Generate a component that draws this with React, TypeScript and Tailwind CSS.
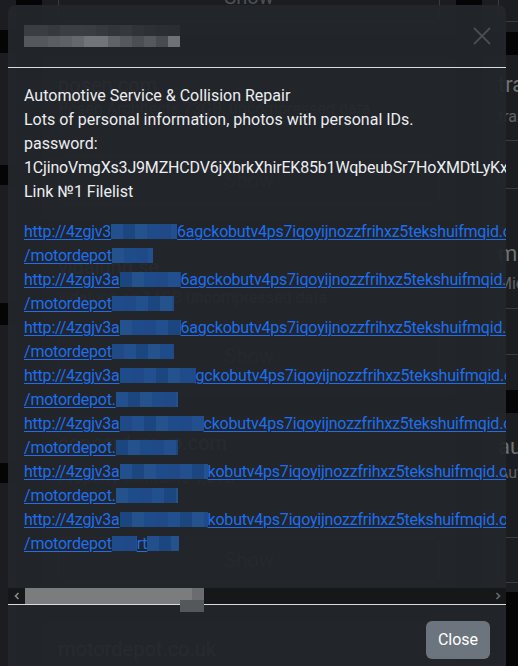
import React from "react";

const TITLE_ROW1 = ["#3a3d41","#3a3d41","#36393d","#3b3e42","#3b3e42","#3a3d41","#363a3e","#333639","#35383c","#303337","#2d3034","#2b2e32","#2a2d31"];
const TITLE_ROW2 = ["#54575b","#54575b","#5a5d61","#5e6165","#66696c","#727578","#727578","#5f6266","#55585c","#4b4e52","#55585c","#484b4f","#6f7275"];

type Piece = string | number;
const LINKS: { l1: Piece[]; l2: Piece[] }[] = [
  { l1: ["http://4zgjv3", 66, "6agckobutv4ps7iqoyijnozzfrihxz5tekshuifmqid.onion"], l2: ["/motordepot", 41] },
  { l1: ["http://4zgjv3a", 61, "6agckobutv4ps7iqoyijnozzfrihxz5tekshuifmqid.onion"], l2: ["/motordepot", 62] },
  { l1: ["http://4zgjv3a", 61, "6agckobutv4ps7iqoyijnozzfrihxz5tekshuifmqid.onion"], l2: ["/motordepot", 62] },
  { l1: ["http://4zgjv3a", 76, "gckobutv4ps7iqoyijnozzfrihxz5tekshuifmqid.onion"], l2: ["/motordepot.", 62] },
  { l1: ["http://4zgjv3a", 84, "ckobutv4ps7iqoyijnozzfrihxz5tekshuifmqid.onion"], l2: ["/motordepot.", 62] },
  { l1: ["http://4zgjv3a", 88, "kobutv4ps7iqoyijnozzfrihxz5tekshuifmqid.onion"], l2: ["/motordepot.", 62] },
  { l1: ["http://4zgjv3a", 88, "kobutv4ps7iqoyijnozzfrihxz5tekshuifmqid.onion"], l2: ["/motordepot", 25, "rt", 32] },
];

const TONES = ["#1f4a87", "#22508f", "#1c467f", "#24528d", "#1e4b89"];

function Redact({ w, seed }: { w: number; seed: number }) {
  const cells = Math.max(1, Math.ceil(w / 12));
  return (
    <span className="inline-flex h-[15px] align-[-2px] overflow-hidden" style={{ width: w }}>
      {Array.from({ length: cells }).map((_, i) => (
        <span key={i} className="h-full w-[12px] shrink-0" style={{ backgroundColor: TONES[(i + seed) % TONES.length] }} />
      ))}
    </span>
  );
}

function LinkLine({ parts, seed }: { parts: Piece[]; seed: number }) {
  return (
    <div className="h-6 leading-6 whitespace-nowrap tracking-[-0.22px]">
      <a className="text-[#1d6ff0] underline decoration-1 underline-offset-[2px]">
        {parts.map((p, i) =>
          typeof p === "number" ? <Redact key={i} w={p} seed={seed + i} /> : <span key={i}>{p}</span>
        )}
      </a>
    </div>
  );
}

function ShowBox({ h = "h-[48px]" }: { h?: string }) {
  return (
    <div className={`${h} rounded-[6px] border border-[#393b3e] flex items-center justify-center text-[20px] text-[#4e5053]`}>
      Show
    </div>
  );
}

function Background() {
  const card = "shrink-0 rounded-[6px] bg-[#1c1d20]";
  return (
    <div className="flex gap-[26px] ml-[-398px] font-['Roboto',sans-serif]">
      {/* column A */}
      <div className="flex flex-col w-[414px] shrink-0 mt-[-70px]">
        <div className={`${card} h-[100px]`} />
        <div className={`${card} mt-[23px] h-[112px]`} />
        <div className={`${card} mt-[20px] h-[118px]`} />
        <div className={`${card} mt-[22px] h-[138px]`} />
        <div className={`${card} mt-[20px] h-[200px]`} />
      </div>
      {/* column B */}
      <div className="flex flex-col w-[414px] shrink-0 mt-[-80px]">
        <div className={`${card} h-[115px] flex flex-col justify-end px-4 pb-[13px]`}>
          <ShowBox h="h-[50px]" />
        </div>
        <div className={`${card} mt-[22px] h-[164px] flex flex-col p-4`}>
          <div className="text-[20px] leading-6 text-[#6f7174]">posen.com</div>
          <div className="text-[16px] leading-6 text-[#5e6063] whitespace-nowrap">Posen Architects 73GB, uncompressed data</div>
          <div className="mt-auto"><ShowBox h="h-[50px]" /></div>
        </div>
        <div className={`${card} mt-[18px] h-[157px] flex flex-col p-4`}>
          <div className="text-[20px] leading-6 text-[#6f7174]">vidalung.se</div>
          <div className="mt-[7px] text-[16px] leading-6 text-[#5e6063] whitespace-nowrap">vidalung.se 14GB uncompressed data</div>
          <div className="mt-auto"><ShowBox /></div>
        </div>
        <div className={`${card} mt-[19px] h-[184px] flex flex-col p-4`}>
          <div className="text-[20px] leading-6 text-[#6f7174]">concordgroup.com</div>
          <div className="mt-[11px] text-[16px] leading-6 text-[#5e6063] whitespace-nowrap">Property contracts 1,5TB</div>
          <div className="mt-auto"><ShowBox h="h-[46px]" /></div>
        </div>
        <div className={`${card} mt-[22px] h-[100px] flex flex-col p-4`}>
          <div className="text-[20px] leading-6 text-[#6f7174]">motordepot.co.uk</div>
        </div>
      </div>
      {/* column C */}
      <div className="flex flex-col w-[414px] shrink-0 mt-[-80px]">
        <div className={`${card} h-[112px] flex flex-col justify-end px-4 pb-[10px]`}>
          <ShowBox h="h-[50px]" />
        </div>
        <div className={`${card} mt-[23px] h-[335px] flex flex-col px-4 pt-[17px]`}>
          <div className="text-[22px] leading-[26px] text-[#6f7174]">transportes.com</div>
          <div className="mt-[7px] text-[16px] leading-6 text-[#5e6063]">transport data</div>
          <div className="mt-[11px]"><ShowBox h="h-[49px]" /></div>
          <div className="mt-[52px] text-[22px] leading-[26px] text-[#6f7174]">midwestcorp.com</div>
          <div className="mt-[5px] text-[16px] leading-6 text-[#5e6063]">Midwest data</div>
          <div className="mt-[12px]"><ShowBox h="h-[47px]" /></div>
        </div>
        <div className={`${card} mt-[23px] h-[179px] flex flex-col px-4 pt-[21px]`}>
          <div className="text-[22px] leading-[26px] text-[#6f7174]">autoparts.com</div>
          <div className="mt-[1px] text-[16px] leading-6 text-[#5e6063]">Auto data</div>
          <div className="mt-auto mb-[9px]"><ShowBox h="h-[46px]" /></div>
        </div>
      </div>
    </div>
  );
}

function Modal() {
  return (
    <div className="absolute left-[8px] top-[5px] w-[498px] h-[690px] rounded-t-[7px] bg-[#23262a]/[0.94] flex flex-col text-[#eceef0] font-['Roboto',sans-serif] text-[16px]">
      {/* header */}
      <div className="h-[63px] shrink-0 border-b border-[#d9dcdf] flex items-center justify-between pl-4 pr-4">
        <div className="flex flex-col">
          <div className="flex h-[11px]">
            {TITLE_ROW1.map((c, i) => (
              <div key={i} className="w-[12px] h-full" style={{ backgroundColor: c }} />
            ))}
          </div>
          <div className="flex h-[11px]">
            {TITLE_ROW2.map((c, i) => (
              <div key={i} className="w-[12px] h-full" style={{ backgroundColor: c }} />
            ))}
          </div>
        </div>
        <svg width="18" height="18" viewBox="0 0 18 18" className="ml-auto mr-[-1px]">
          <path d="M1 1 L17 17 M17 1 L1 17" stroke="#4a4d51" strokeWidth="1.8" />
        </svg>
      </div>
      {/* body */}
      <div className="shrink-0 overflow-hidden px-4 pt-4 pb-4">
        <div className="mb-4 leading-6 whitespace-nowrap">
          <div>Automotive Service &amp; Collision Repair</div>
          <div>Lots of personal information, photos with personal IDs.</div>
          <div>password:</div>
          <div className="tracking-[-0.18px]">1CjinoVmgXs3J9MZHCDV6jXbrkXhirEK85b1WqbeubSr7HoXMDtLyKx</div>
          <div>Link №1 Filelist</div>
        </div>
        <div className="mb-4">
          {LINKS.map((l, i) => (
            <div key={i}>
              <LinkLine parts={l.l1} seed={i} />
              <LinkLine parts={l.l2} seed={i + 2} />
            </div>
          ))}
        </div>
      </div>
      {/* scrollbar */}
      <div className="h-[16px] shrink-0 flex bg-[#161719]">
        <div className="w-[17px] flex items-center justify-center">
          <svg width="8" height="8" viewBox="0 0 8 8"><path d="M5.5 1 L2.5 4 L5.5 7" stroke="#8a8b8d" strokeWidth="1.6" fill="none" /></svg>
        </div>
        <div className="flex-1 relative">
          <div className="h-full w-[167px] bg-[#7b7c7e]" />
          <div className="absolute left-[167px] top-0 w-[12px] h-[12px] bg-[#6b6c6f]" />
          <div className="absolute left-[155px] top-[12px] w-[24px] h-[12px] bg-[#55585b]" />
        </div>
        <div className="w-[17px] flex items-center justify-center">
          <svg width="8" height="8" viewBox="0 0 8 8"><path d="M2.5 1 L5.5 4 L2.5 7" stroke="#6a6b6d" strokeWidth="1.6" fill="none" /></svg>
        </div>
      </div>
      {/* footer */}
      <div className="border-t border-[#d9dcdf] flex justify-end px-4 pt-4">
        <button className="h-[38px] w-[64px] rounded-[6px] bg-[#6c757d] text-white text-[16px]">Close</button>
      </div>
    </div>
  );
}

export default function App() {
  return (
    <div className="relative w-[518px] h-[666px] overflow-hidden bg-[#050505]">
      <Background />
      <Modal />
    </div>
  );
}
